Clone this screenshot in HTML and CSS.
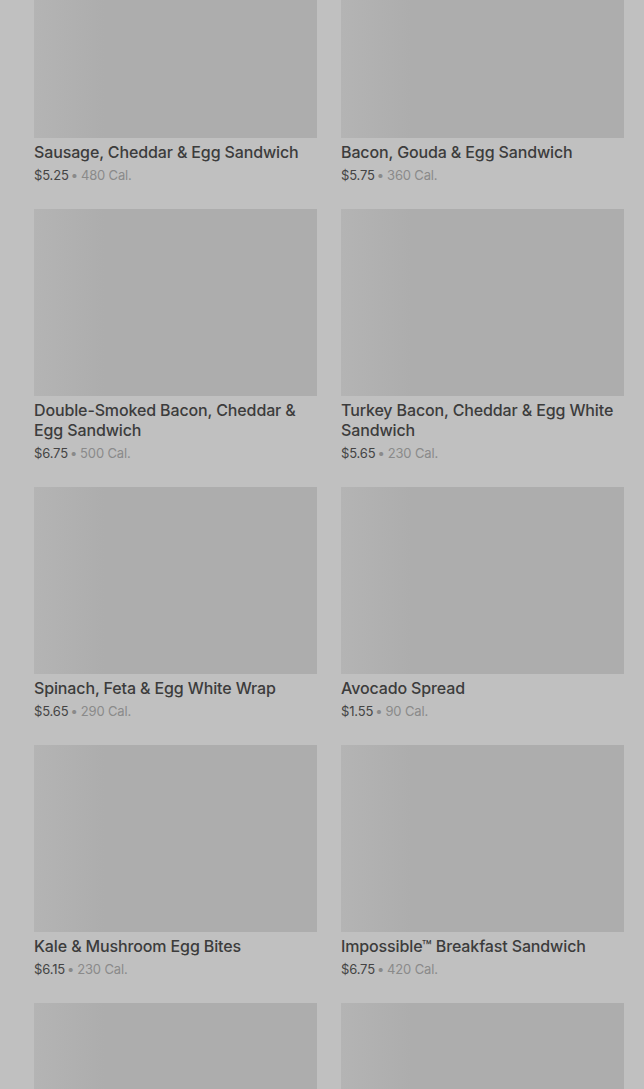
FILE: index.html
```
<!DOCTYPE html>
<html lang="en">
<head>
    <meta charset="UTF-8">
    <meta name="viewport" content="width=device-width, initial-scale=1.0">
    <title>Breakfast</title>
    <link rel="stylesheet" href="styles.css">
</head>
<body>
    <div class="menu-grid">
        <div class="item">
            <div class="item-image"></div>
            <p class="item-name">Sausage, Cheddar &amp; Egg Sandwich</p>
            <p class="item-meta"><span class="price">$5.25</span><span class="dot">•</span>480 Cal.</p>
        </div>
        <div class="item">
            <div class="item-image"></div>
            <p class="item-name">Bacon, Gouda &amp; Egg Sandwich</p>
            <p class="item-meta"><span class="price">$5.75</span><span class="dot">•</span>360 Cal.</p>
        </div>
        <div class="item">
            <div class="item-image"></div>
            <p class="item-name">Double-Smoked Bacon, Cheddar &amp; Egg Sandwich</p>
            <p class="item-meta"><span class="price">$6.75</span><span class="dot">•</span>500 Cal.</p>
        </div>
        <div class="item">
            <div class="item-image"></div>
            <p class="item-name">Turkey Bacon, Cheddar &amp; Egg White Sandwich</p>
            <p class="item-meta"><span class="price">$5.65</span><span class="dot">•</span>230 Cal.</p>
        </div>
        <div class="item">
            <div class="item-image"></div>
            <p class="item-name">Spinach, Feta &amp; Egg White Wrap</p>
            <p class="item-meta"><span class="price">$5.65</span><span class="dot">•</span>290 Cal.</p>
        </div>
        <div class="item">
            <div class="item-image"></div>
            <p class="item-name">Avocado Spread</p>
            <p class="item-meta"><span class="price">$1.55</span><span class="dot">•</span>90 Cal.</p>
        </div>
        <div class="item">
            <div class="item-image"></div>
            <p class="item-name">Kale &amp; Mushroom Egg Bites</p>
            <p class="item-meta"><span class="price">$6.15</span><span class="dot">•</span>230 Cal.</p>
        </div>
        <div class="item">
            <div class="item-image"></div>
            <p class="item-name">Impossible™ Breakfast Sandwich</p>
            <p class="item-meta"><span class="price">$6.75</span><span class="dot">•</span>420 Cal.</p>
        </div>
        <div class="item">
            <div class="item-image"></div>
        </div>
        <div class="item">
            <div class="item-image"></div>
        </div>
    </div>
</body>
</html>
```

FILE: styles.css
```
body {
    margin: 0;
    padding: 0;
    background-color: #c0c0c0;
    font-family: Inter, "Noto Sans", sans-serif;
    overflow: hidden;
}
.menu-grid {
    display: grid;
    grid-template-columns: 283px 283px;
    column-gap: 24px;
    row-gap: 24px;
    margin-top: -49px;
    padding-left: 34px;
}
.item-image {
    height: 187px;
    background: linear-gradient(90deg, #b4b4b4 0, #adadad 70px, #adadad 100%);
}
.item-name {
    margin: 4px 0 0;
    font-size: 16px;
    line-height: 20px;
    font-weight: 500;
    letter-spacing: -0.13px;
    color: #3c3c3c;
}
.item-meta {
    margin: 3px 0 0;
    font-size: 13px;
    line-height: 20px;
    letter-spacing: -0.15px;
    color: #8a8a8a;
}
.item-meta .price {
    color: #444;
}
.item-meta .dot {
    margin: 0 3px 0 2px;
}
```
